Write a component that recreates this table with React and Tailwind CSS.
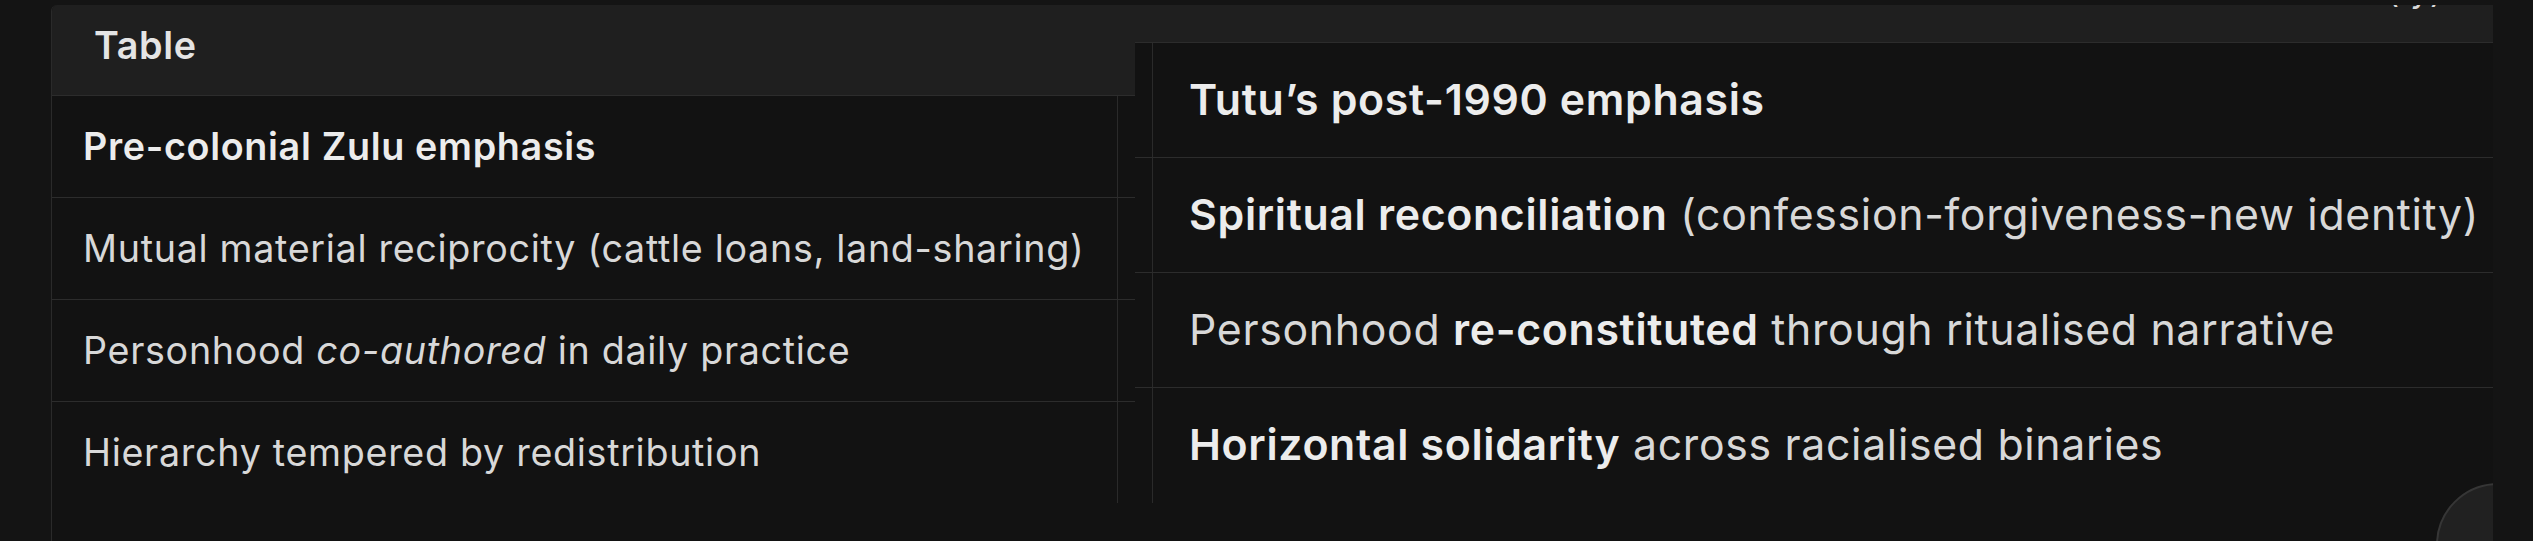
import React from "react";

const leftRows = [
  { content: <span className="font-semibold text-[#ececec]">Pre-colonial Zulu emphasis</span> },
  { content: <span>Mutual material reciprocity (cattle loans, land-sharing)</span> },
  {
    content: (
      <span>
        Personhood <em className="italic">co-authored</em> in daily practice
      </span>
    ),
  },
  { content: <span>Hierarchy tempered by redistribution</span> },
];

const rightRows = [
  { content: <span className="font-semibold text-[#ececec]">Tutu’s post-1990 emphasis</span> },
  {
    content: (
      <span>
        <strong className="font-semibold text-[#ececec]">Spiritual reconciliation</strong> (confession-forgiveness-new identity)
      </span>
    ),
  },
  {
    content: (
      <span>
        Personhood <strong className="font-semibold text-[#ececec]">re-constituted</strong> through ritualised narrative
      </span>
    ),
  },
  {
    content: (
      <span>
        <strong className="font-semibold text-[#ececec]">Horizontal solidarity</strong> across racialised binaries
      </span>
    ),
  },
];

export default function App() {
  return (
    <div className="h-[541px] w-[2533px] overflow-hidden bg-[#141414] pt-[5px] font-['Inter','Noto_Sans',sans-serif] text-[#d8d8d8] tracking-[0.042em]">
      <div className="relative ml-[51px] flex h-[600px] w-[2442px] overflow-hidden rounded-tl-[6px] border-l border-[#2a2a2a] bg-[#121212]">
        {/* clipped text fragments at top right */}
        <div className="absolute right-[50px] top-[-33px] text-[34px] leading-[36px] text-[#d8d8d8]">( y)</div>

        {/* left block */}
        <div className="flex w-[1083px] shrink-0 flex-col text-[37.7px]">
          <div className="flex h-[91px] items-center border-b border-[#2c2c2c] bg-[#1f1f1f] pb-[9px] pl-[42px] font-semibold text-[#e4e4e4]">
            Table
          </div>
          {leftRows.map((r, i) => (
            <div
              key={i}
              className={`flex ${i < leftRows.length - 1 ? "h-[102px] border-b border-[#2c2c2c]" : "h-[101px]"}`}
            >
              <div className="flex w-[1066px] items-center border-r border-[#2a2a2a] pl-[31px] whitespace-nowrap">
                {r.content}
              </div>
              <div className="flex-1" />
            </div>
          ))}
        </div>

        {/* right block */}
        <div className="flex flex-1 flex-col text-[42.8px]">
          <div className="h-[38px] border-b border-[#2c2c2c] bg-[#1f1f1f]" />
          {rightRows.map((r, i) => (
            <div
              key={i}
              className={`flex ${i < rightRows.length - 1 ? "h-[115px] border-b border-[#2c2c2c]" : "h-[115px]"}`}
            >
              <div className="w-[18px] shrink-0 border-r border-[#2a2a2a]" />
              <div className="flex flex-1 items-center pl-[36px] whitespace-nowrap">{r.content}</div>
            </div>
          ))}
        </div>

        {/* partially visible round button */}
        <div className="absolute left-[2384px] top-[478px] h-[124px] w-[124px] rounded-full border-2 border-[#363636] bg-[#212121]" />
      </div>
    </div>
  );
}
